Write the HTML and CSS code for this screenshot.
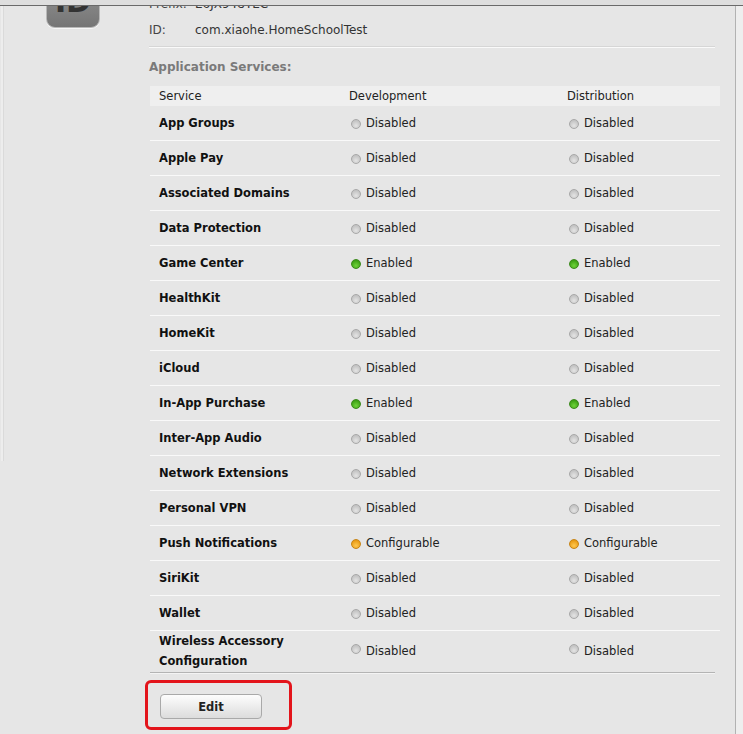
FILE: index.html
```html
<!DOCTYPE html>
<html>
<head>
<meta charset="utf-8">
<link rel="stylesheet" href="styles.css">
</head>
<body>
<div class="topbar"></div>
<div class="page">
  <div class="leftedge"></div>
  <div class="main">
    <div class="iconcol">
      <div class="appicon"><span>ID</span></div>
    </div>
    <div class="content">
      <div class="info">
        <div class="inforow"><span class="k">Prefix:</span><span class="v">E6JX948TEC</span></div>
        <div class="inforow"><span class="k">ID:</span><span class="v">com.xiaohe.HomeSchoolTest</span></div>
      </div>
      <div class="sep"></div>
      <div class="section">Application Services:</div>
      <div class="table">
        <div class="thead">
          <div>Service</div><div>Development</div><div>Distribution</div>
        </div>
        <div class="row"><div class="name">App Groups</div><div class="st"><i class="dot off"></i>Disabled</div><div class="st"><i class="dot off"></i>Disabled</div></div>
        <div class="row"><div class="name">Apple Pay</div><div class="st"><i class="dot off"></i>Disabled</div><div class="st"><i class="dot off"></i>Disabled</div></div>
        <div class="row"><div class="name">Associated Domains</div><div class="st"><i class="dot off"></i>Disabled</div><div class="st"><i class="dot off"></i>Disabled</div></div>
        <div class="row"><div class="name">Data Protection</div><div class="st"><i class="dot off"></i>Disabled</div><div class="st"><i class="dot off"></i>Disabled</div></div>
        <div class="row"><div class="name">Game Center</div><div class="st"><i class="dot on"></i>Enabled</div><div class="st"><i class="dot on"></i>Enabled</div></div>
        <div class="row"><div class="name">HealthKit</div><div class="st"><i class="dot off"></i>Disabled</div><div class="st"><i class="dot off"></i>Disabled</div></div>
        <div class="row"><div class="name">HomeKit</div><div class="st"><i class="dot off"></i>Disabled</div><div class="st"><i class="dot off"></i>Disabled</div></div>
        <div class="row"><div class="name">iCloud</div><div class="st"><i class="dot off"></i>Disabled</div><div class="st"><i class="dot off"></i>Disabled</div></div>
        <div class="row"><div class="name">In-App Purchase</div><div class="st"><i class="dot on"></i>Enabled</div><div class="st"><i class="dot on"></i>Enabled</div></div>
        <div class="row"><div class="name">Inter-App Audio</div><div class="st"><i class="dot off"></i>Disabled</div><div class="st"><i class="dot off"></i>Disabled</div></div>
        <div class="row"><div class="name">Network Extensions</div><div class="st"><i class="dot off"></i>Disabled</div><div class="st"><i class="dot off"></i>Disabled</div></div>
        <div class="row"><div class="name">Personal VPN</div><div class="st"><i class="dot off"></i>Disabled</div><div class="st"><i class="dot off"></i>Disabled</div></div>
        <div class="row"><div class="name">Push Notifications</div><div class="st"><i class="dot cfg"></i>Configurable</div><div class="st"><i class="dot cfg"></i>Configurable</div></div>
        <div class="row"><div class="name">SiriKit</div><div class="st"><i class="dot off"></i>Disabled</div><div class="st"><i class="dot off"></i>Disabled</div></div>
        <div class="row"><div class="name">Wallet</div><div class="st"><i class="dot off"></i>Disabled</div><div class="st"><i class="dot off"></i>Disabled</div></div>
        <div class="row tall"><div class="name">Wireless Accessory<br>Configuration</div><div class="st"><i class="dot off up"></i>Disabled</div><div class="st"><i class="dot off up"></i>Disabled</div></div>
      </div>
      <div class="endline"></div>
      <div class="highlight">
        <button class="btn">Edit</button>
      </div>
    </div>
  </div>
  <div class="rightedge"></div>
</div>
</body>
</html>
```
FILE: styles.css
```css
html, body {
  margin: 0;
  padding: 0;
  background: #e6e6e6;
  height: 100%;
  overflow: hidden;
}
body {
  font-family: "DejaVu Sans", "Liberation Sans", sans-serif;
  font-size: 11.5px;
  color: #222;
  position: relative;
}
.topbar {
  position: absolute;
  top: 0;
  left: 0;
  right: 0;
  height: 5px;
  background: #dedede;
  border-bottom: 1px solid #6a6a6a;
  z-index: 5;
}
.page {
  display: flex;
  height: 734px;
}
.leftedge {
  width: 2px;
  height: 455px;
  margin-top: 6px;
  margin-left: 1px;
  background: #ededed;
  border-right: 1px solid #dadada;
}
.main {
  flex: 1;
  display: flex;
  margin-top: -9px;
}
.iconcol {
  width: 141px;
  padding-left: 42px;
  box-sizing: border-box;
}
.appicon {
  width: 54px;
  height: 54px;
  margin-top: -17px;
  border-radius: 9px;
  background: linear-gradient(#9a9a9a, #757575);
  border: 1px solid #b8b8b8;
  box-shadow: 0 1px 0 #f6f6f6;
  display: flex;
  align-items: flex-end;
  justify-content: center;
  box-sizing: border-box;
}
.appicon span {
  font-weight: bold;
  font-size: 30px;
  color: #333;
  line-height: 30px;
  margin-bottom: 10px;
}
.content {
  width: 575px;
  padding-left: 4px;
}
.inforow {
  height: 26px;
  line-height: 26px;
  display: flex;
  font-size: 12px;
  color: #333;
}
.inforow .k {
  width: 46px;
  color: #444;
}
.sep {
  margin-top: 3px;
  width: 566px;
  height: 1px;
  background: #fafafa;
  border-top: 1px solid #d6d6d6;
}
.section {
  margin-top: 11px;
  line-height: 16px;
  font-weight: bold;
  color: #7a7a7a;
  font-size: 12px;
}
.table {
  margin-top: 11px;
  margin-left: 1px;
  width: 570px;
}
.thead, .row {
  display: grid;
  grid-template-columns: 190px 218px 1fr;
  padding-left: 9px;
  align-items: center;
}
.thead {
  height: 20px;
  background: #efefef;
  color: #222;
}
.row {
  height: 34px;
  border-bottom: 1px solid #f9f9f9;
}
.row.tall {
  height: 40px;
  border-bottom: none;
}
.name {
  font-weight: bold;
  color: #111;
  line-height: 20px;
}
.st {
  display: flex;
  align-items: center;
  color: #222;
}
.dot {
  display: inline-block;
  width: 10px;
  height: 10px;
  border-radius: 50%;
  margin-left: 2px;
  margin-right: 5px;
  margin-top: 1px;
  box-sizing: border-box;
}
.dot.up { margin-top: -5px; }
.dot.off {
  background: radial-gradient(circle at 50% 70%, #e4e4e4, #c4c4c4 70%);
  border: 1px solid #a8a8a8;
}
.dot.on {
  background: radial-gradient(circle at 50% 70%, #6fd43a, #3c9e14 75%);
  border: 1px solid #3b8a1a;
}
.dot.cfg {
  background: radial-gradient(circle at 50% 70%, #ffc850, #e89a14 75%);
  border: 1px solid #c88414;
}
.endline {
  margin-top: 1px;
  margin-left: 1px;
  width: 565px;
  height: 1px;
  background: #b4b4b4;
  border-bottom: 1px solid #f4f4f4;
}
.highlight {
  margin-top: 6px;
  margin-left: -4px;
  width: 147px;
  height: 50px;
  box-sizing: border-box;
  border: 3px solid #e3141b;
  border-radius: 6px;
  padding: 11px 0 0 12px;
}
.btn {
  display: block;
  width: 102px;
  height: 25px;
  border: 1px solid #a9a9a9;
  border-radius: 4px;
  background: linear-gradient(#fdfdfd, #dcdcdc);
  font-family: "DejaVu Sans", "Liberation Sans", sans-serif;
  font-weight: bold;
  font-size: 11.5px;
  color: #222;
  padding: 0;
}
.rightedge {
  width: 7px;
  margin-top: 6px;
  border-left: 1px solid #b2b2b2;
  background: #eeeeee;
}
```
